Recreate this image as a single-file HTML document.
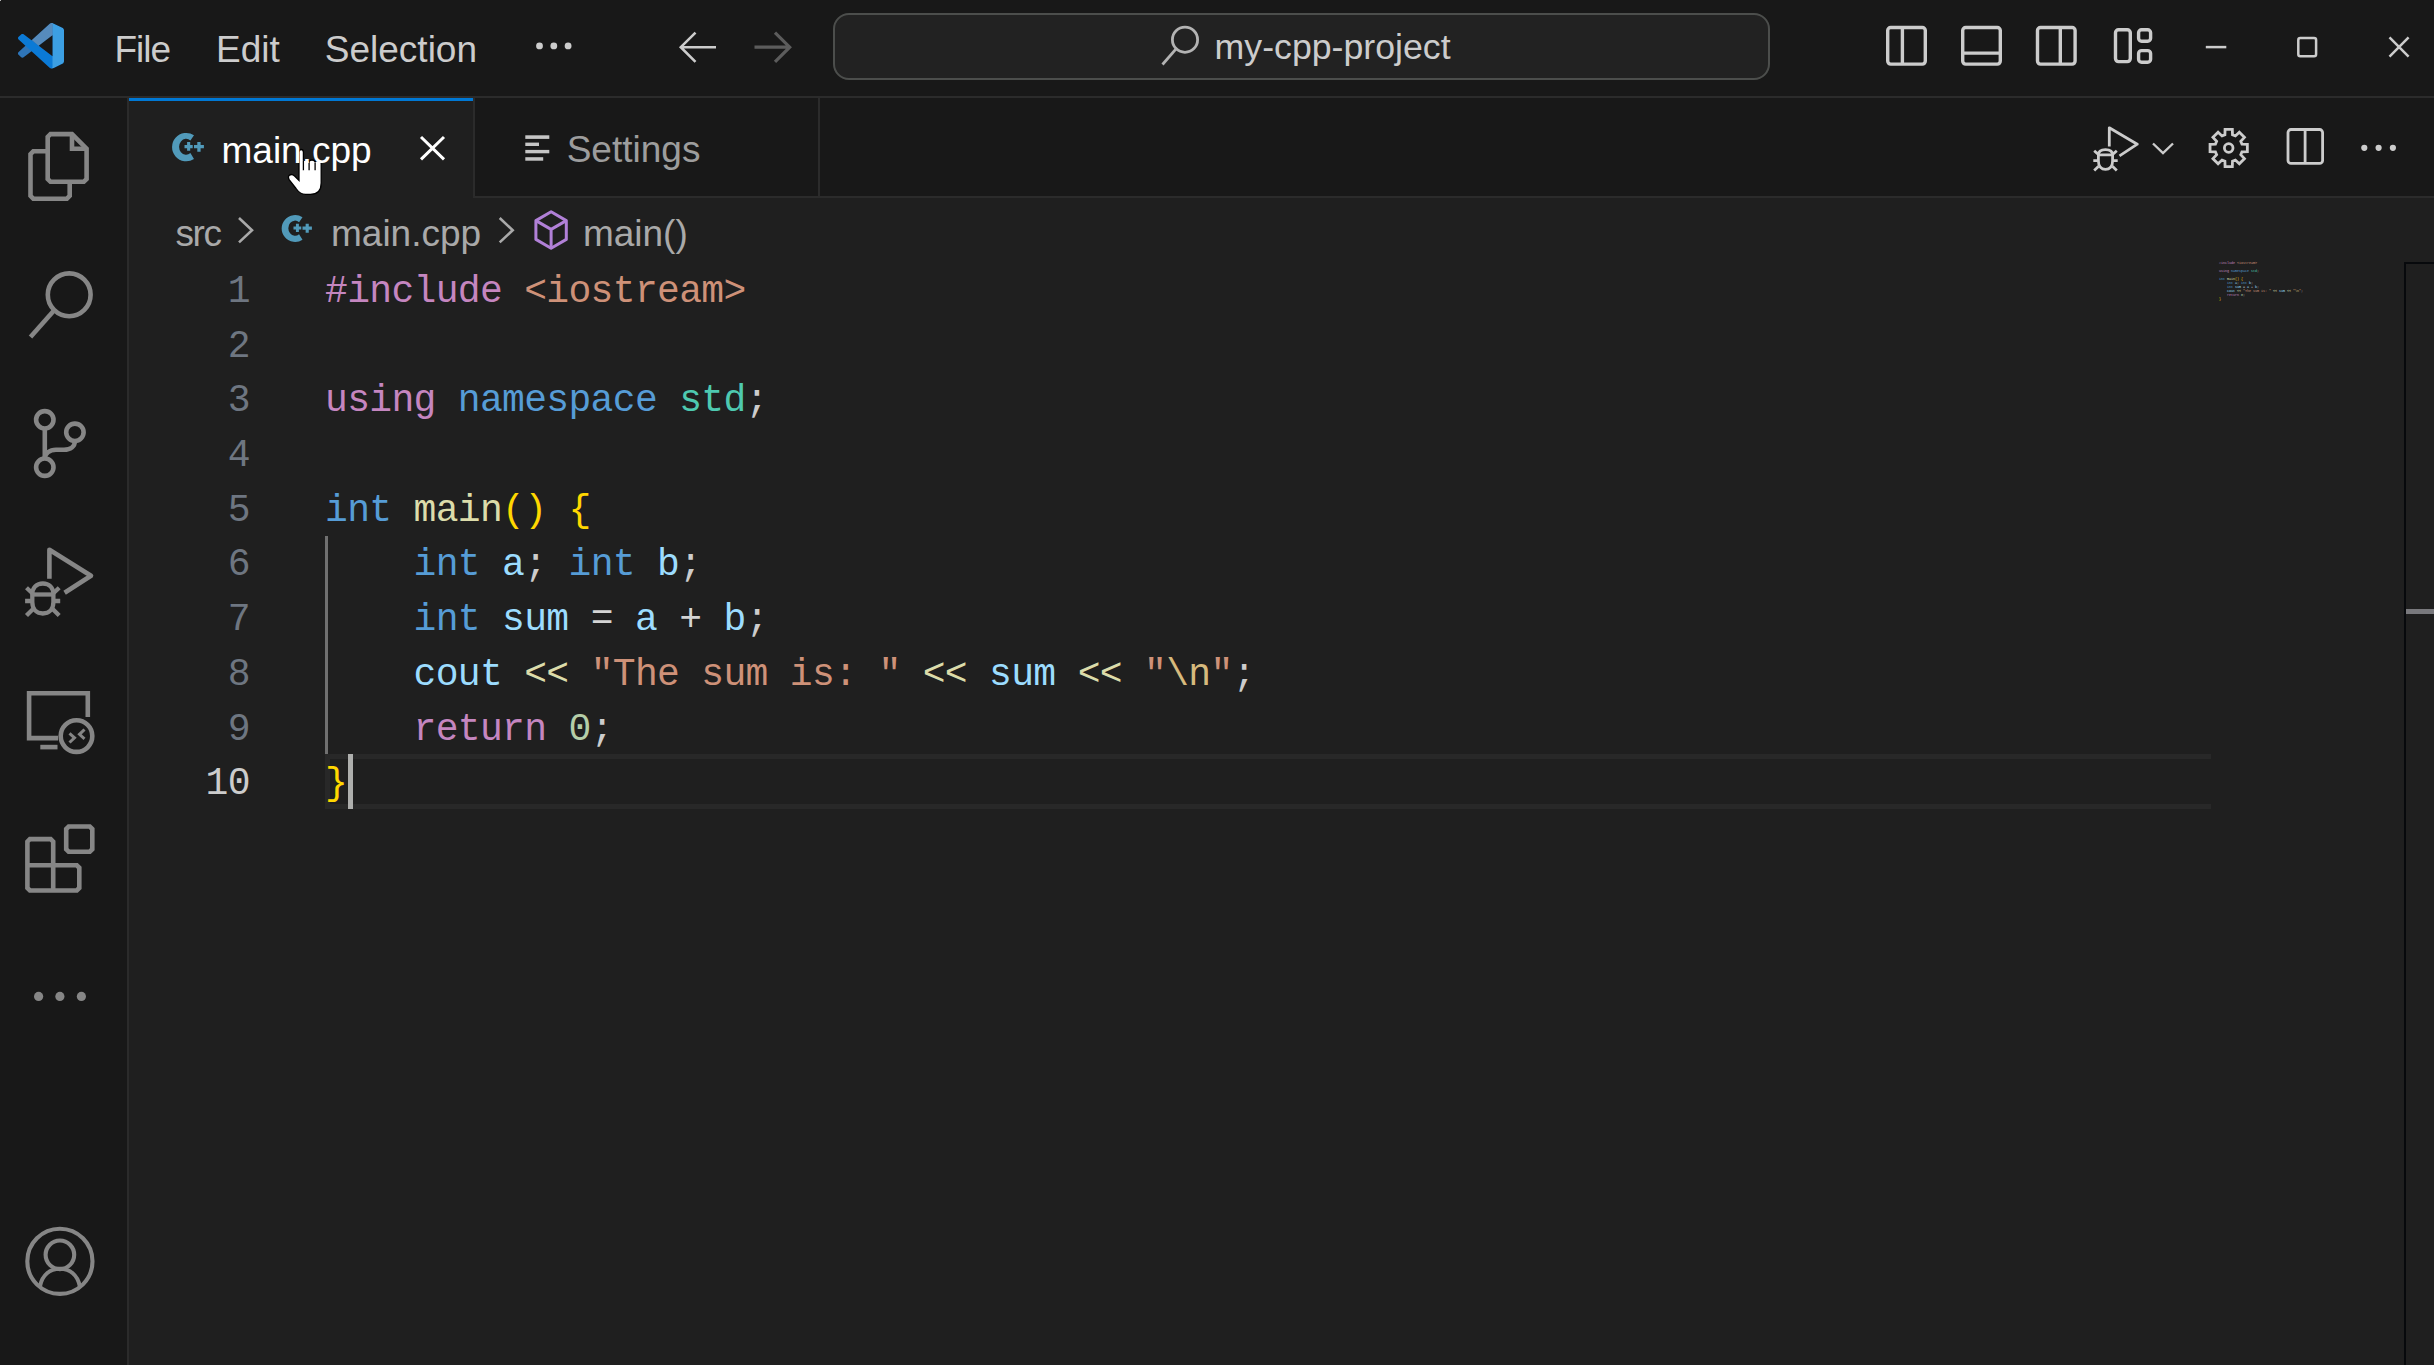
<!DOCTYPE html>
<html><head><meta charset="utf-8">
<style>
*{margin:0;padding:0;box-sizing:border-box}
html,body{width:2434px;height:1365px;overflow:hidden;background:#1f1f1f;font-family:"Liberation Sans",sans-serif}
.a{position:absolute}
.ui{position:absolute;white-space:pre;line-height:37px;font-size:37px;height:37px}
.code{position:absolute;font-family:"Liberation Mono",monospace;white-space:pre;font-size:38px;letter-spacing:-0.670px}
.ln{height:54.7px;line-height:54.7px}
</style></head><body>
<div class="a" style="left:0;top:0;width:1px;height:1px;background:#b8b8b8;z-index:5"></div>
<div class="a" style="left:0;top:0;width:2434px;height:96px;background:#181818"></div>
<div class="a" style="left:0;top:96px;width:2434px;height:2px;background:#2b2b2b"></div>
<div class="a" style="left:0;top:98px;width:127px;height:1267px;background:#181818"></div>
<div class="a" style="left:127px;top:98px;width:2px;height:1267px;background:#2b2b2b"></div>
<div class="a" style="left:129px;top:98px;width:2305px;height:98px;background:#181818"></div>
<div class="a" style="left:475px;top:196px;width:1959px;height:2px;background:#2b2b2b"></div>
<div class="a" style="left:129px;top:98px;width:344px;height:100px;background:#1f1f1f"></div>
<div class="a" style="left:129px;top:98px;width:344px;height:3px;background:#0078d4"></div>
<div class="a" style="left:473px;top:98px;width:2px;height:100px;background:#2b2b2b"></div>
<div class="a" style="left:818px;top:98px;width:2px;height:100px;background:#2b2b2b"></div>

<svg class="a" style="left:0;top:0" width="2434" height="1365" viewBox="0 0 2434 1365" fill="none">
<!-- ===== activity bar ===== -->
<g stroke="#868686" stroke-width="4.6" fill="none" stroke-linejoin="miter">
 <path d="M47.7 151.3H33.3L30.5 154.1V195.9L33.3 198.7H66.9L69.7 195.9V181.8"/>
 <path d="M50.5 134.1H72L86.6 148.7V179L83.8 181.8H50.5L47.7 179V136.9Z"/>
 <path d="M72 134.1V148.7H86.6"/>
 <circle cx="69.2" cy="294.8" r="21.4"/>
 <path d="M54 310.5L30.5 337"/>
 <circle cx="44.8" cy="419.8" r="8.7"/>
 <circle cx="74.9" cy="432.3" r="8.7"/>
 <circle cx="44.8" cy="467.2" r="8.7"/>
 <path d="M44.8 428.5V458.5"/>
 <path d="M74.9 441C74.9 446.5 70.5 449.8 64 449.8H56C49.5 449.8 44.8 453.5 44.8 458.5"/>
 <path d="M49.4 578.8V549.8L91 575.8L64.6 592.8" stroke-linejoin="round"/>
 <path d="M87.8 717V693.3H29.1V738.1H58"/>
 <path d="M40.3 747.1H57.5"/>
 <circle cx="76.5" cy="736.1" r="15.8"/>
 <path d="M66.2 829V849.2L68.7 851.7H89.8L92.3 849.2V829L89.8 826.5H68.7Z"/>
 <path d="M27.4 841.6V888L29.9 890.5H76.8L79.3 888V867.8L76.8 865.3H53.2V841.6L50.7 839.1H29.9Z"/>
 <path d="M53.2 865.3V890.5M27.4 865.3H53.2"/>
</g>
<g stroke="#868686" stroke-width="3.6" fill="none">
 <path d="M32.3 594.5C32.3 587.5 36.8 583.5 42.85 583.5C48.9 583.5 53.4 587.5 53.4 594.5V602C53.4 609.5 48.9 613.5 42.85 613.5C36.8 613.5 32.3 609.5 32.3 602Z" stroke-width="4.3"/>
 <path d="M32.3 594.5H53.4" stroke-width="4.3"/>
 <path d="M26.5 587.8L32.6 593.5M59.2 587.8L53.1 593.5M25.1 601H32.3M60.2 601H53.4M26.5 615.5L32.8 609.3M59.2 615.5L52.9 609.3" stroke-width="4.3"/>
 <path d="M69.5 733.3L74.5 737.8L69.5 742.5M84.5 729.5L79.5 734.3L84.5 738.8" stroke-width="3"/>
</g>
<g fill="#868686">
 <circle cx="38.6" cy="996.4" r="4.6"/>
 <circle cx="59.9" cy="996.4" r="4.6"/>
 <circle cx="81.4" cy="996.4" r="4.6"/>
</g>
<g stroke="#868686" stroke-width="4.1" fill="none">
 <circle cx="59.9" cy="1261.3" r="32.6"/>
 <circle cx="59.9" cy="1254.8" r="14.3"/>
 <path d="M40 1286C42.5 1275 50 1268.8 59.9 1268.8C69.8 1268.8 77.3 1275 79.8 1286"/>
</g>
<!-- ===== tabs ===== -->
<g id="cpp" fill="#519aba">
 <path d="M194 135.2A14.2 14.2 0 1 0 194 159L190.4 153.1A7 8 0 1 1 190.4 140.5Z"/>
 <path d="M184.5 145.1H192.7V148.2H184.5ZM187.1 142.1H190.2V150.8H187.1Z"/>
 <path d="M194 145H203.9V148.3H194ZM197.3 142H200.6V151.7H197.3Z"/>
</g>
<g stroke="#ffffff" stroke-width="3" fill="none">
 <path d="M421 137L444 159.3M444 137L421 159.3"/>
</g>
<g fill="#c5c5c5">
 <rect x="525.3" y="135.3" width="24" height="3.6"/>
 <rect x="525.3" y="142.6" width="13.7" height="3.4"/>
 <rect x="525.3" y="149.9" width="24" height="3.4"/>
 <rect x="525.3" y="157.2" width="17.9" height="3.5"/>
</g>
<!-- ===== breadcrumbs ===== -->
<use href="#cpp" transform="translate(281.6,215) scale(0.95) translate(-172,-132.9)"/>
<g stroke="#a9a9a9" stroke-width="2.6" fill="none">
 <path d="M239 218L252 230.2L239 242.4"/>
 <path d="M499.7 218L512.7 230.2L499.7 242.4"/>
</g>
<g stroke="#b180d7" stroke-width="3" fill="none" stroke-linejoin="round">
 <path d="M551.1 211.8L566.3 220.6V239.4L551.1 248.2L535.9 239.4V220.6Z"/>
 <path d="M535.9 220.6L551.1 229.4L566.3 220.6M551.1 229.4V248.2"/>
</g>
<!-- ===== editor actions ===== -->
<g stroke="#cccccc" stroke-width="2.8" fill="none">
 <path d="M2109.3 146.5V127.8L2137.3 144.2L2119.5 155.8" stroke-linejoin="round"/>
 <path d="M2098.4 154.9C2098.4 151.5 2101 149.6 2105.5 149.6C2110 149.6 2112.6 151.5 2112.6 154.9V161C2112.6 166.5 2109.5 169.3 2105.5 169.3C2101.5 169.3 2098.4 166.5 2098.4 161Z"/>
 <path d="M2098.4 154.9H2112.6M2094.2 150.8L2098.6 154.6M2116.8 150.8L2112.4 154.6M2093.3 160.7H2098.4M2117.7 160.7H2112.6M2094.2 170.4L2098.6 166.2M2116.8 170.4L2112.4 166.2"/>
 <path d="M2153 143.5L2163 153L2173 143.5" stroke-width="2.4"/>
 <path d="M2241.97 144.20 L2247.35 144.37 L2247.35 151.63 L2241.97 151.80 L2240.77 154.69 L2244.45 158.62 L2239.32 163.75 L2235.39 160.07 L2232.50 161.27 L2232.33 166.65 L2225.07 166.65 L2224.90 161.27 L2222.01 160.07 L2218.08 163.75 L2212.95 158.62 L2216.63 154.69 L2215.43 151.80 L2210.05 151.63 L2210.05 144.37 L2215.43 144.20 L2216.63 141.31 L2212.95 137.38 L2218.08 132.25 L2222.01 135.93 L2224.90 134.73 L2225.07 129.35 L2232.33 129.35 L2232.50 134.73 L2235.39 135.93 L2239.32 132.25 L2244.45 137.38 L2240.77 141.31Z"/>
 <circle cx="2228.7" cy="148" r="4.3"/>
 <rect x="2288" y="129.5" width="34.6" height="33.9" rx="3"/>
 <path d="M2305.1 129.5V163.4"/>
</g>
<g fill="#cccccc">
 <circle cx="2364.3" cy="147.8" r="3.1"/>
 <circle cx="2378.6" cy="147.8" r="3.1"/>
 <circle cx="2392.9" cy="147.8" r="3.1"/>
</g>
<!-- ===== hand cursor ===== -->
<path d="M299 152.3Q299 149.5 301.2 149.5Q303.4 149.5 303.4 152.3V160.8Q303.6 159.9 306.2 159.9Q309 159.9 309.1 161.8Q309.4 160 312.1 160Q315 160 315.1 162.2Q315.5 160.5 318.1 160.5Q321.2 160.5 321.2 163.5V183Q321.2 194.3 310.5 194.3H305.5Q300 194.3 296 188.5L289.3 179.8Q287.4 176.8 289.6 175.1Q292 173.6 294.6 176L299 180.4Z" fill="#ffffff" stroke="#000000" stroke-width="1.3"/>
<path d="M303.4 161V170.3M309.1 162V170.3M315.1 162.4V170.3" stroke="#000000" stroke-width="1.3"/>


<!-- VS Code logo -->
<g transform="translate(18,22.8) scale(0.46)">
 <mask id="lm" maskUnits="userSpaceOnUse" x="0" y="0" width="100" height="100">
  <path fill-rule="evenodd" d="M70.9 99.3C72.5 99.9 74.3 99.9 75.9 99.1L96.5 89.2C98.6 88.2 100 86 100 83.6V16.4C100 14 98.6 11.8 96.5 10.8L75.9 .9C73.8-.1 71.3.1 69.5 1.4C69.3 1.6 69 1.8 68.8 2.1L29.4 38L12.2 25C10.6 23.8 8.4 23.9 6.9 25.2L1.4 30.3C-.5 31.9-.5 34.8 1.4 36.4L16.2 50L1.4 63.6C-.5 65.2-.5 68.1 1.4 69.7L6.9 74.8C8.4 76.1 10.6 76.2 12.2 75L29.4 62L68.8 97.9C69.4 98.5 70.1 99 70.9 99.3ZM75 27.3L45.1 50L75 72.7V27.3Z" fill="white"/>
 </mask>
 <g mask="url(#lm)">
  <path d="M0 0H100V100H0Z" fill="#1c7fd6"/>
  <path d="M96.5 10.8L75.9.9C73.5-.3 70.6.2 68.8 2.1L1.3 63.6C-.5 65.2-.5 68.1 1.3 69.7L6.8 74.8C8.3 76.1 10.5 76.2 12.1 75L93.4 13.4C96.1 11.3 100 13.2 100 16.7V16.4C100 14 98.6 11.8 96.5 10.8Z" fill="#2f75b8"/>
  <path d="M96.5 89.2L75.9 99.1C73.5 100.3 70.6 99.8 68.8 97.9L1.3 36.4C-.5 34.8-.5 31.9 1.3 30.3L6.8 25.2C8.3 23.9 10.5 23.8 12.1 25L93.4 86.6C96.1 88.7 100 86.8 100 83.3V83.6C100 86 98.6 88.2 96.5 89.2Z" fill="#0b7ad6"/>
  <path d="M75.9 99.1C73.5 100.3 70.6 99.8 68.8 97.9C71.1 100.2 75 98.6 75 95.3V4.7C75 1.4 71.1-.2 68.8 2.1C70.6.2 73.5-.3 75.9.9L96.5 10.8C98.6 11.8 100 14 100 16.4V83.6C100 86 98.6 88.2 96.5 89.2Z" fill="#3c9fe3"/>
  <path d="M30 37L69 2L75 0V27L45 50Z" fill="#5d8fbd" opacity="0.85"/>
 </g>
</g>
<!-- menu dots -->
<circle cx="539.5" cy="45.9" r="3.4" fill="#cccccc"/>
<circle cx="553.8" cy="45.9" r="3.4" fill="#cccccc"/>
<circle cx="568.1" cy="45.9" r="3.4" fill="#cccccc"/>
<!-- back/forward arrows -->
<g stroke="#cccccc" stroke-width="2.6" fill="none">
 <path d="M716 47.2H681M695.5 32.6L680.8 47.2L695.5 61.8"/>
</g>
<g stroke="#5c5c5c" stroke-width="3.2" fill="none">
 <path d="M754.5 47.2H789.5M775 32.6L789.7 47.2L775 61.8"/>
</g>
<!-- command center -->
<rect x="834" y="14" width="935" height="65" rx="15" fill="#222222" stroke="#4c4e4c" stroke-width="2"/>
<g stroke="#b3b3b3" stroke-width="2.8" fill="none">
 <circle cx="1185" cy="39.7" r="12.6"/>
 <path d="M1176.3 48.6L1162.5 64.5"/>
</g>
<!-- layout icons -->
<g stroke="#cccccc" stroke-width="3.4" fill="none">
 <rect x="1887.7" y="27.5" width="37.6" height="36.6" rx="3"/>
 <path d="M1902.4 27.5V64.1"/>
 <rect x="1962.7" y="27.5" width="37.6" height="36.6" rx="3"/>
 <path d="M1962.7 53.1H2000.3"/>
 <rect x="2037.5" y="27.5" width="37.6" height="36.6" rx="3"/>
 <path d="M2060.3 27.5V64.1"/>
 <rect x="2115.5" y="29.7" width="14.8" height="31.9" rx="3"/>
 <rect x="2138.6" y="29.7" width="12" height="11.6" rx="3"/>
 <rect x="2138.6" y="50.6" width="12" height="11.6" rx="3"/>
</g>
<!-- window controls -->
<g stroke="#cccccc" stroke-width="2.5" fill="none">
 <path d="M2205.8 47.1H2226.3"/>
 <rect x="2298.3" y="38" width="17.8" height="18.2" rx="2"/>
 <path d="M2389.5 37.4L2408.6 56.7M2408.6 37.4L2389.5 56.7"/>
</g>

</svg>
<!-- title menu -->
<div class="ui" style="left:114.5px;top:30.7px;color:#cccccc;letter-spacing:-1px">File</div>
<div class="ui" style="left:216px;top:31px;color:#cccccc">Edit</div>
<div class="ui" style="left:324.8px;top:31px;color:#cccccc">Selection</div>
<div class="ui" style="left:1214.6px;top:28.9px;color:#cccccc;font-size:35.7px">my-cpp-project</div>

<!-- tabs -->
<div class="ui" style="left:221.5px;top:131.7px;color:#ffffff">main.cpp</div>
<div class="ui" style="left:566.7px;top:131.4px;color:#9d9d9d">Settings</div>

<!-- breadcrumbs -->
<div class="ui" style="left:175.6px;top:214.7px;color:#a9a9a9;letter-spacing:-1.5px">src</div>
<div class="ui" style="left:331px;top:214.7px;color:#a9a9a9">main.cpp</div>
<div class="ui" style="left:582.9px;top:214.7px;color:#a9a9a9">main()</div>

<!-- editor decorations -->
<div class="a" style="left:325px;top:754px;width:1886px;height:55px;border:5px solid #282828;border-right:0"></div>
<div class="a" style="left:325px;top:536px;width:3px;height:218px;background:#707070"></div>

<div class="code" style="left:325px;top:265.00px"><div class="ln"><span style="color:#c586c0">#include</span><span style="color:#cccccc"> </span><span style="color:#ce9178">&lt;iostream&gt;</span>&#8203;</div><div class="ln">&#8203;</div><div class="ln"><span style="color:#c586c0">using</span><span style="color:#cccccc"> </span><span style="color:#569cd6">namespace</span><span style="color:#cccccc"> </span><span style="color:#4ec9b0">std</span><span style="color:#cccccc">;</span>&#8203;</div><div class="ln">&#8203;</div><div class="ln"><span style="color:#569cd6">int</span><span style="color:#cccccc"> </span><span style="color:#dcdcaa">main</span><span style="color:#ffd700">()</span><span style="color:#cccccc"> </span><span style="color:#ffd700">{</span>&#8203;</div><div class="ln"><span style="color:#cccccc">    </span><span style="color:#569cd6">int</span><span style="color:#cccccc"> </span><span style="color:#9cdcfe">a</span><span style="color:#cccccc">;</span><span style="color:#cccccc"> </span><span style="color:#569cd6">int</span><span style="color:#cccccc"> </span><span style="color:#9cdcfe">b</span><span style="color:#cccccc">;</span>&#8203;</div><div class="ln"><span style="color:#cccccc">    </span><span style="color:#569cd6">int</span><span style="color:#cccccc"> </span><span style="color:#9cdcfe">sum</span><span style="color:#cccccc"> </span><span style="color:#d4d4d4">=</span><span style="color:#cccccc"> </span><span style="color:#9cdcfe">a</span><span style="color:#cccccc"> </span><span style="color:#d4d4d4">+</span><span style="color:#cccccc"> </span><span style="color:#9cdcfe">b</span><span style="color:#cccccc">;</span>&#8203;</div><div class="ln"><span style="color:#cccccc">    </span><span style="color:#9cdcfe">cout</span><span style="color:#cccccc"> </span><span style="color:#dcdcaa">&lt;&lt;</span><span style="color:#cccccc"> </span><span style="color:#ce9178">"The sum is: "</span><span style="color:#cccccc"> </span><span style="color:#dcdcaa">&lt;&lt;</span><span style="color:#cccccc"> </span><span style="color:#9cdcfe">sum</span><span style="color:#cccccc"> </span><span style="color:#dcdcaa">&lt;&lt;</span><span style="color:#cccccc"> </span><span style="color:#ce9178">"</span><span style="color:#d7ba7d">\n</span><span style="color:#ce9178">"</span><span style="color:#cccccc">;</span>&#8203;</div><div class="ln"><span style="color:#cccccc">    </span><span style="color:#c586c0">return</span><span style="color:#cccccc"> </span><span style="color:#b5cea8">0</span><span style="color:#cccccc">;</span>&#8203;</div><div class="ln"><span style="color:#ffd700">}</span>&#8203;</div></div>
<div class="code" style="left:138.5px;top:265.00px;width:111.3px;text-align:right"><div class="ln" style="color:#6e7681">1</div><div class="ln" style="color:#6e7681">2</div><div class="ln" style="color:#6e7681">3</div><div class="ln" style="color:#6e7681">4</div><div class="ln" style="color:#6e7681">5</div><div class="ln" style="color:#6e7681">6</div><div class="ln" style="color:#6e7681">7</div><div class="ln" style="color:#6e7681">8</div><div class="ln" style="color:#6e7681">9</div><div class="ln" style="color:#cccccc">10</div></div>
<div class="a" style="left:348px;top:754px;width:5px;height:55px;background:#aeafad"></div>

<div class="a" style="left:2219px;top:260.5px;font-family:'Liberation Mono',monospace;font-size:3.34px;white-space:pre;opacity:1"><div style="height:4px;line-height:4px"><span style="color:#c586c0">#include</span><span style="color:#cccccc"> </span><span style="color:#ce9178">&lt;iostream&gt;</span>&#8203;</div><div style="height:4px;line-height:4px">&#8203;</div><div style="height:4px;line-height:4px"><span style="color:#c586c0">using</span><span style="color:#cccccc"> </span><span style="color:#569cd6">namespace</span><span style="color:#cccccc"> </span><span style="color:#4ec9b0">std</span><span style="color:#cccccc">;</span>&#8203;</div><div style="height:4px;line-height:4px">&#8203;</div><div style="height:4px;line-height:4px"><span style="color:#569cd6">int</span><span style="color:#cccccc"> </span><span style="color:#dcdcaa">main</span><span style="color:#ffd700">()</span><span style="color:#cccccc"> </span><span style="color:#ffd700">{</span>&#8203;</div><div style="height:4px;line-height:4px"><span style="color:#cccccc">    </span><span style="color:#569cd6">int</span><span style="color:#cccccc"> </span><span style="color:#9cdcfe">a</span><span style="color:#cccccc">;</span><span style="color:#cccccc"> </span><span style="color:#569cd6">int</span><span style="color:#cccccc"> </span><span style="color:#9cdcfe">b</span><span style="color:#cccccc">;</span>&#8203;</div><div style="height:4px;line-height:4px"><span style="color:#cccccc">    </span><span style="color:#569cd6">int</span><span style="color:#cccccc"> </span><span style="color:#9cdcfe">sum</span><span style="color:#cccccc"> </span><span style="color:#d4d4d4">=</span><span style="color:#cccccc"> </span><span style="color:#9cdcfe">a</span><span style="color:#cccccc"> </span><span style="color:#d4d4d4">+</span><span style="color:#cccccc"> </span><span style="color:#9cdcfe">b</span><span style="color:#cccccc">;</span>&#8203;</div><div style="height:4px;line-height:4px"><span style="color:#cccccc">    </span><span style="color:#9cdcfe">cout</span><span style="color:#cccccc"> </span><span style="color:#dcdcaa">&lt;&lt;</span><span style="color:#cccccc"> </span><span style="color:#ce9178">"The sum is: "</span><span style="color:#cccccc"> </span><span style="color:#dcdcaa">&lt;&lt;</span><span style="color:#cccccc"> </span><span style="color:#9cdcfe">sum</span><span style="color:#cccccc"> </span><span style="color:#dcdcaa">&lt;&lt;</span><span style="color:#cccccc"> </span><span style="color:#ce9178">"</span><span style="color:#d7ba7d">\n</span><span style="color:#ce9178">"</span><span style="color:#cccccc">;</span>&#8203;</div><div style="height:4px;line-height:4px"><span style="color:#cccccc">    </span><span style="color:#c586c0">return</span><span style="color:#cccccc"> </span><span style="color:#b5cea8">0</span><span style="color:#cccccc">;</span>&#8203;</div><div style="height:4px;line-height:4px"><span style="color:#ffd700">}</span>&#8203;</div></div>
<!-- scrollbar shadow -->
<div class="a" style="left:2404px;top:262px;width:1.5px;height:1103px;background:#07090c"></div>
<div class="a" style="left:2404px;top:262px;width:30px;height:1.5px;background:#07090c"></div>
<div class="a" style="left:2406px;top:609px;width:28px;height:5px;background:#79797d"></div>

</body></html>
